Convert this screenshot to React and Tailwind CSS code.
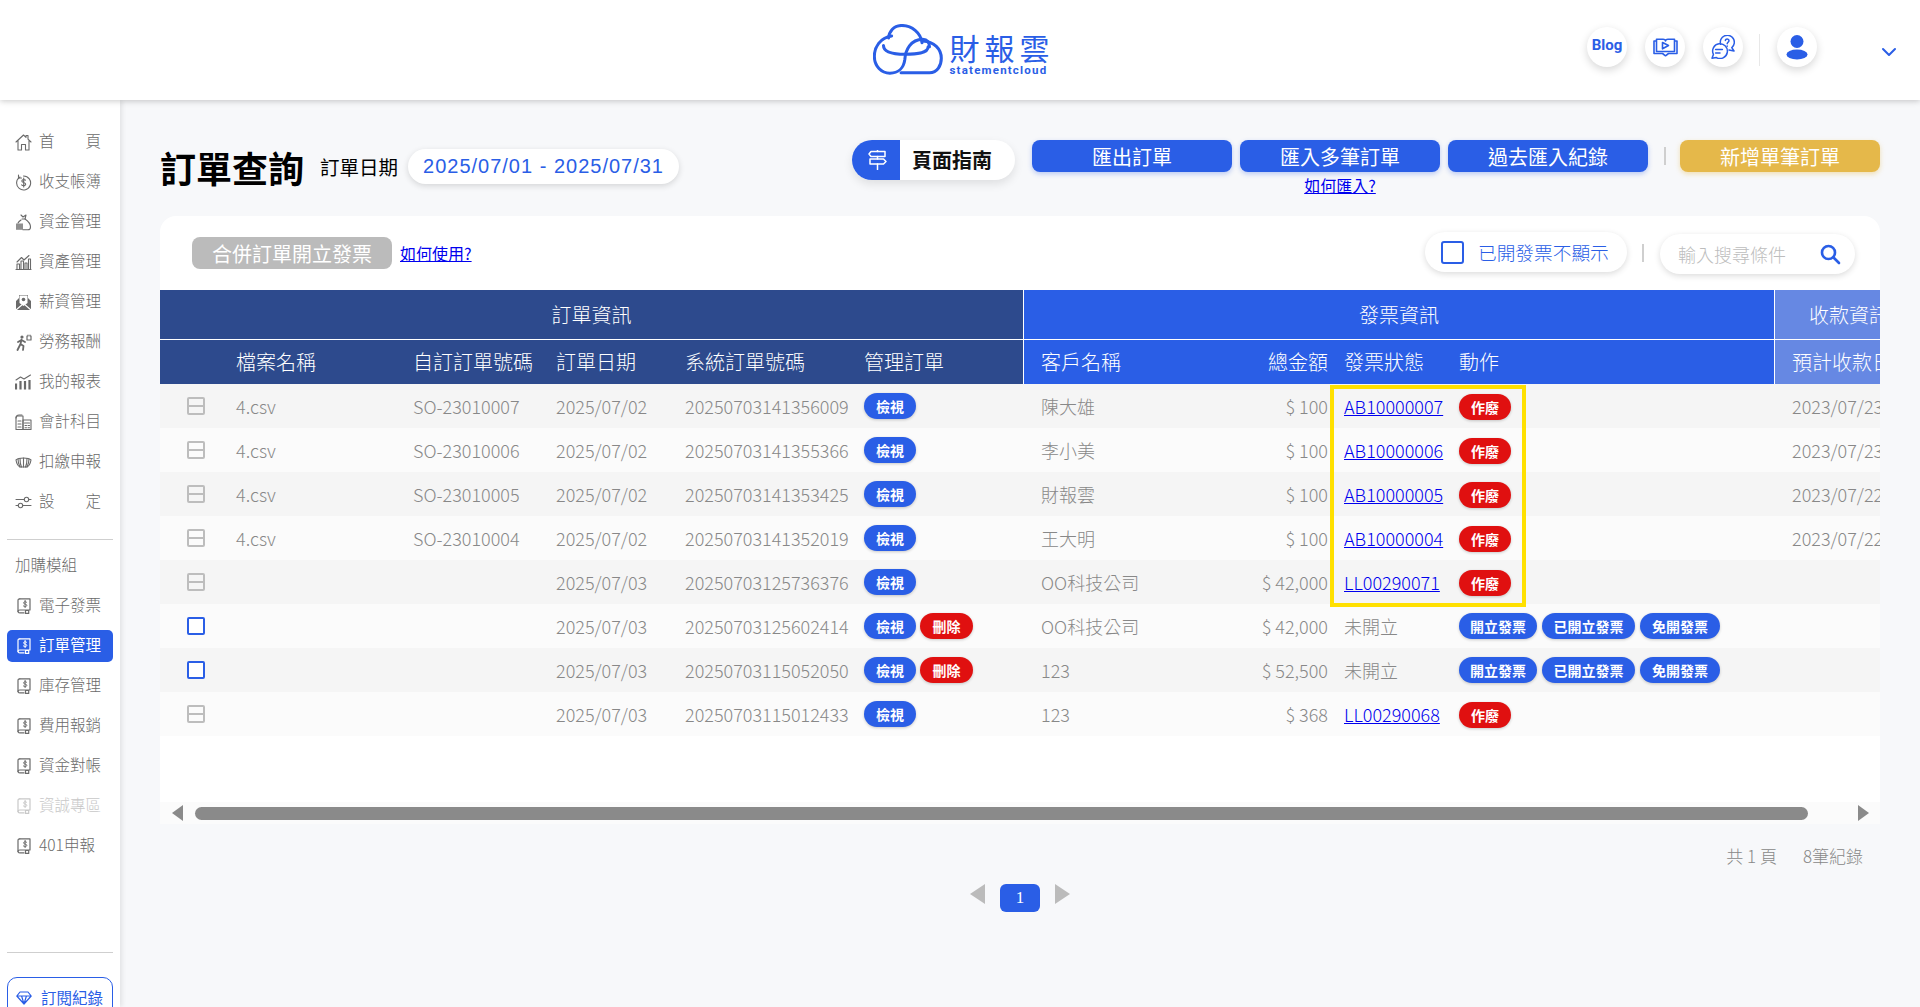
import React from "react";

const BLUE = "#2a5ee6";

function Logo() {
  return (
    <div className="flex items-start gap-[7px] pl-[2px]">
      <svg width="70" height="51" viewBox="45 45 207 150" fill="none" stroke={BLUE} strokeWidth="9" strokeLinecap="round" strokeLinejoin="round">
        <path d="M128 189 L212 189 C236 189 247 166 247 146 C247 118 226 97 192 95" />
        <path d="M190 100 C186 70 160 49 130 49 C106 49 93 66 91 86" />
        <path d="M100 80 C66 85 49 113 49 140 C49 170 70 190 95 190 C120 190 136 174 139 150 C141 122 156 90 192 90 C206 90 212 100 212 112" />
        <path d="M76 108 C76 130 112 134 140 134 C172 134 208 132 208 112" />
      </svg>
      <div className="flex flex-col w-[100px] pt-[6px]">
        <div className="text-[#2a5ee6] text-[30px] leading-[34px] tracking-[5px] whitespace-nowrap">財報雲</div>
        <div className="text-[#2a5ee6] text-[11.5px] leading-[12px] font-bold tracking-[1.2px] whitespace-nowrap font-[family-name:Roboto,sans-serif]">statementcloud</div>
      </div>
    </div>
  );
}

function Round({ children }) {
  return (
    <div className="w-[40px] h-[40px] rounded-full bg-white shadow-[0_3px_8px_rgba(0,0,0,0.16)] flex items-center justify-center">
      {children}
    </div>
  );
}

function Header() {
  return (
    <header className="relative z-20 h-[100px] shrink-0 bg-white shadow-[0_1px_6px_rgba(0,0,0,0.22)] grid grid-cols-[1fr_auto_1fr] items-start">
      <div />
      <div className="pt-[24px]"><Logo /></div>
      <div className="flex justify-end items-start pt-[27px] pr-[23px]">
        <div className="flex items-start gap-[18px]">
          <Round><span className="text-[#2a5ee6] text-[15px] leading-none pb-[3px] font-bold font-[family-name:Roboto,sans-serif]">Blog</span></Round>
          <Round>
            <svg width="25" height="19" viewBox="0 0 25 19" fill="none" stroke={BLUE} strokeWidth="1.6" strokeLinejoin="round" strokeLinecap="round">
              <path d="M3 3 H1 V15.5 H9.5 L12.5 17.8 L15.5 15.5 H24 V3 H22" />
              <path d="M3.5 1.2 H10 C11.5 1.2 12.5 1.8 12.5 3 C12.5 1.8 13.5 1.2 15 1.2 H21.5 V13.5 H3.5 Z" />
              <path d="M9.5 4.5 L15.5 7.5 L9.5 10.8 Z" />
            </svg>
          </Round>
          <Round>
            <svg width="24" height="24" viewBox="0 0 24 24" fill="none" stroke={BLUE} strokeWidth="1.5" strokeLinejoin="round" strokeLinecap="round">
              <path d="M9.6 9.2 A7 7 0 1 1 20.8 12.6 L23 16 L18 15" />
              <path d="M8 8.8 A7.4 7.4 0 1 1 5.4 22.6 L1 23.2 L2.4 19.4 A7.4 7.4 0 0 1 8 8.8 Z" />
              <path d="M14.4 5.4 C14.4 3.4 18 3.4 18 5.6 C18 7.2 16.2 7.3 16.2 8.8" />
              <path d="M16.2 11 V11.2" />
              <path d="M4.6 14.6 H11.4 M4.6 18 H9" />
            </svg>
          </Round>
        </div>
        <div className="w-px h-[32px] bg-[#e8e8e8] mt-[7px] ml-[16px] mr-[17px]" />
        <Round>
          <svg width="22" height="26" viewBox="0 0 22 26" fill={BLUE}>
            <circle cx="11" cy="7.5" r="6.5" />
            <ellipse cx="11" cy="20.5" rx="10.5" ry="5" />
          </svg>
        </Round>
        <svg className="ml-[64px] mt-[20px]" width="16" height="10" viewBox="0 0 16 10" fill="none" stroke={BLUE} strokeWidth="2" strokeLinecap="round" strokeLinejoin="round">
          <path d="M2 2 L8 8 L14 2" />
        </svg>
      </div>
    </header>
  );
}

const ic = { width: 17, height: 17, viewBox: "0 0 17 17", fill: "none", stroke: "currentColor", strokeWidth: 1.1, strokeLinejoin: "round", strokeLinecap: "round" };
const Icons = {
  home: <svg {...ic}><path d="M1 8 L8.5 1 L11 3.3 V1.5 H13 V5.2 L16 8 M3 6.5 V16 H6.5 V10.5 H10.5 V16 H14 V6.5" /></svg>,
  ledger: <svg {...ic}><path d="M5 3 A7 7 0 1 0 8.5 2" /><path d="M3.5 1 V4 H6.5" /><path d="M10.5 6.2 C9.5 5.2 6.8 5.4 6.8 7 C6.8 9 10.7 8 10.7 10.2 C10.7 11.9 7.8 12 6.6 10.8 M8.7 4 V13" /></svg>,
  bag: <svg {...ic}><path d="M6 1 L8 3 L11 1 L10 5 C13 7 15.5 10 15.5 13 C15.5 15 14.5 15.8 13 15.8 H8" /><path d="M7 5 H10.5" /><path d="M6 6 C4.5 7 3.5 8 3 9" /><rect x="1" y="9.5" width="7" height="6.3" fill="currentColor" stroke="none" opacity="0.75" /></svg>,
  asset: <svg {...ic}><path d="M1 15.5 H16" /><path d="M2 15 V10 H4.5 V15 M6 15 V7 H8.5 V15 M10 15 V9 H12 V15 M13.5 15 V5 H15.5 V15" /><path d="M2 8 L6.5 3.5 L9 6 L14 1.5" /></svg>,
  salary: <svg {...ic}><path d="M1 7 L4 4 V1 H13 V4 L16 7 V16 H1 Z" fill="currentColor" stroke="none" /><path d="M4.5 1.5 H12.5 V9 L8.5 12 L4.5 9 Z" fill="#fff" stroke="none" /><path d="M1 16 L8.5 9.5 L16 16" stroke="#fff" /><circle cx="8.5" cy="5.5" r="1.8" fill="currentColor" stroke="none" /></svg>,
  labor: <svg {...ic} strokeWidth="1.8"><circle cx="7" cy="3" r="1.6" fill="currentColor" stroke="none" /><path d="M6.5 5.5 L5.5 10 L2.5 16 M5.5 10 L8.5 12 L8 16 M6.5 6 L3 8 M6.5 6 L10 8" /><path d="M12 2 V6 H16 V2 M13 1 V2 M15 1 V2" strokeWidth="1.2" /></svg>,
  report: <svg {...ic}><path d="M1 15.5 V9.5 M5.5 15.5 V7 M10 15.5 V7 M14.5 15.5 V6" strokeWidth="2.2" strokeLinecap="butt" /><path d="M1 6 L5.5 3 L9 5 L15.5 1" /></svg>,
  account: <svg {...ic}><path d="M8 2 H3 C2 2 1 3 1 4 V15.5 H8 V2 Z" /><path d="M1 4 C1 2 2.5 1 4 1 H7" /><rect x="8" y="6" width="8" height="9.5" /><path d="M9.5 9 H14.5 M3 7 H6 M3 10 H6 M3 13 H6 M10 11.5 H11.5 M13 11.5 H14.5 M10 13.7 H11.5 M13 13.7 H14.5" /></svg>,
  tax: <svg {...ic}><path d="M1 6 C3 4 5 4 8.5 4 C12 4 14 4 16 6 C15.5 9 14 12 12 13 H5 C3 12 1.5 9 1 6 Z" /><path d="M5 4.5 C5 8 5.5 11 6.5 13 M8.5 4 V13 M12 4.5 C12 8 11.5 11 10.5 13 M3 5 C3 8 4 11 5 13 M14 5 C14 8 13 11 12 13" /></svg>,
  setting: <svg {...ic}><path d="M1 5.5 H9 M14 5.5 H16 M1 11.5 H3 M8 11.5 H16" /><circle cx="11.5" cy="5.5" r="2.2" /><circle cx="5.5" cy="11.5" r="2.2" /></svg>,
  module: <svg width="14" height="16" viewBox="0 0 14 16" fill="none" stroke="currentColor" strokeWidth="1.2" strokeLinejoin="round" strokeLinecap="round"><path d="M2.8 0.8 H13 V12 H2.8 C1.6 12 1 12.6 1 13.4 C1 14.2 1.6 14.9 2.8 14.9 H7" /><path d="M2.8 0.8 C1.6 0.8 1 1.5 1 2.5 V13.4" /><path d="M9.6 4.2 C8.8 3.4 6.6 3.5 6.6 4.9 C6.6 6.6 9.8 5.6 9.8 7.4 C9.8 8.8 7.4 8.8 6.4 8" strokeWidth="1" /><path d="M8.1 2.4 V9.6" strokeWidth="1" /><rect x="8.5" y="12.5" width="3.2" height="2.9" /></svg>,
  gem: <svg width="16" height="14" viewBox="0 0 20 17" fill="none" stroke={BLUE} strokeWidth="1.5" strokeLinejoin="round"><path d="M5 1 H15 L19 6 L10 16 L1 6 Z M1 6 H19 M7 6 L10 16 L13 6" /></svg>,
};

function SideItem({ icon, label, justify, active, dim, indent }) {
  const color = active ? "text-white" : dim ? "text-[#c8c8c8]" : "text-[#6a6a6a]";
  return (
    <div className="h-[40px] flex items-center">
      <div className={`w-[106px] ml-[7px] h-[32px] rounded-[5px] flex items-center ${active ? "bg-[#2a5ee6]" : ""} ${color}`}>
        <div className={`${indent ? "pl-[10px]" : "pl-[8px]"} w-[32px] shrink-0`}>{icon}</div>
        <div className={`text-[15.5px] leading-none pb-[2px] whitespace-nowrap ${justify ? "w-[62px] flex justify-between" : ""} ${active ? "font-normal" : "font-light"}`}>
          {justify ? label.split("").map((c, i) => <span key={i}>{c}</span>) : label}
        </div>
      </div>
    </div>
  );
}

function Sidebar() {
  return (
    <aside className="relative z-10 w-[120px] shrink-0 bg-white shadow-[2px_0_5px_rgba(0,0,0,0.09)] pt-[22px] overflow-hidden">
      <SideItem icon={Icons.home} label="首頁" justify />
      <SideItem icon={Icons.ledger} label="收支帳簿" />
      <SideItem icon={Icons.bag} label="資金管理" />
      <SideItem icon={Icons.asset} label="資產管理" />
      <SideItem icon={Icons.salary} label="薪資管理" />
      <SideItem icon={Icons.labor} label="勞務報酬" />
      <SideItem icon={Icons.report} label="我的報表" />
      <SideItem icon={Icons.account} label="會計科目" />
      <SideItem icon={Icons.tax} label="扣繳申報" />
      <SideItem icon={Icons.setting} label="設定" justify />
      <div className="h-px bg-[#cfcfcf] mx-[7px] mt-[17px]" />
      <div className="h-[40px] mt-[6px] pl-[15px] pb-[2px] flex items-center text-[15.5px] font-light text-[#6a6a6a]">加購模組</div>
      <SideItem indent icon={Icons.module} label="電子發票" />
      <SideItem indent active icon={Icons.module} label="訂單管理" />
      <SideItem indent icon={Icons.module} label="庫存管理" />
      <SideItem indent icon={Icons.module} label="費用報銷" />
      <SideItem indent icon={Icons.module} label="資金對帳" />
      <SideItem indent dim icon={Icons.module} label="資誠專區" />
      <SideItem indent icon={Icons.module} label="401申報" />
      <div className="h-px bg-[#cfcfcf] mx-[7px] mt-[86px]" />
      <div className="mx-[7px] mt-[24px] h-[44px] rounded-[10px] border border-[#2a5ee6] flex items-start pt-[9px] pl-[8px] gap-[9px]">
        <div className="pt-[4px]">{Icons.gem}</div>
        <span className="text-[15.5px] leading-[20px] text-[#2a5ee6]">訂閱紀錄</span>
      </div>
    </aside>
  );
}

function TopButton({ children, gold }) {
  return (
    <button className={`w-[200px] h-[32px] pt-[2px] rounded-[8px] text-white text-[20px] leading-none ${gold ? "bg-[#e5b84a] shadow-[0_2px_5px_rgba(229,184,74,0.4)]" : "bg-[#2a5ee6] shadow-[0_2px_5px_rgba(42,94,230,0.3)]"}`}>
      {children}
    </button>
  );
}

function TitleRow() {
  return (
    <div className="h-[76px] flex justify-between items-start shrink-0">
      <div className="flex items-center h-[35px] mt-[9px]">
        <h1 className="text-[36px] font-bold text-black leading-none w-[160px] whitespace-nowrap">訂單查詢</h1>
        <span className="text-[19.5px] text-black whitespace-nowrap w-[88px]">訂單日期</span>
        <div className="w-[271px] h-[35px] pb-[2px] rounded-full bg-white shadow-[0_2px_6px_rgba(0,0,0,0.14)] flex items-center justify-center text-[20px] tracking-[1px] text-[#2a5ee6] font-[family-name:Liberation_Sans,sans-serif] whitespace-nowrap">
          2025/07/01 - 2025/07/31
        </div>
      </div>
      <div className="flex items-start">
        <div className="flex w-[163px] h-[40px] rounded-full bg-white overflow-hidden shadow-[0_4px_10px_rgba(0,0,0,0.1)] mr-[17px]">
          <div className="w-[48px] bg-[#2a5ee6] flex items-center justify-center pl-[2px]">
            <svg width="19" height="20" viewBox="0 0 19 20" fill="none" stroke="#fff" strokeWidth="1.5" strokeLinejoin="round" strokeLinecap="round">
              <path d="M3 1.5 H17 V6.5 H3 L1 4 Z" />
              <path d="M2 9 H15.5 L18 11.5 L15.5 14 H2 Z" />
              <path d="M9.5 0.3 V1.5 M9.5 6.5 V9 M9.5 14 V19.5" />
            </svg>
          </div>
          <div className="flex-1 flex items-center pl-[12px] text-[20px] font-bold text-[#111] whitespace-nowrap">頁面指南</div>
        </div>
        <div className="flex items-start gap-[8px]">
          <TopButton>匯出訂單</TopButton>
          <div className="flex flex-col items-center">
            <TopButton>匯入多筆訂單</TopButton>
            <a className="text-[16px] leading-[20px] mt-[3px] text-[#0000ee] underline whitespace-nowrap">如何匯入?</a>
          </div>
          <TopButton>過去匯入紀錄</TopButton>
        </div>
        <div className="w-[2px] h-[18px] bg-[#cfcfcf] mt-[7px] ml-[16px] mr-[14px]" />
        <TopButton gold>新增單筆訂單</TopButton>
      </div>
    </div>
  );
}

function Toolbar() {
  return (
    <div className="h-[74px] shrink-0 flex items-center justify-between pl-[32px] pr-[25px]">
      <div className="flex items-center">
        <button className="w-[200px] h-[32px] pt-[2px] rounded-[8px] bg-[#bbbbbb] text-white text-[20px] leading-none whitespace-nowrap">合併訂單開立發票</button>
        <a className="ml-[8px] text-[16px] text-[#0000ee] underline whitespace-nowrap">如何使用?</a>
      </div>
      <div className="flex items-center">
        <label className="w-[202px] h-[40px] -mt-[2px] rounded-full bg-white shadow-[0_2px_6px_rgba(0,0,0,0.14)] flex items-center pl-[16px]">
          <span className="w-[23px] h-[23px] rounded-[3px] border-2 border-[#2a5ee6] bg-white shrink-0" />
          <span className="ml-[14px] pt-[1px] text-[18.7px] leading-none font-light text-[#2a5ee6] whitespace-nowrap">已開發票不顯示</span>
        </label>
        <div className="w-[2px] h-[18px] bg-[#cfcfcf] ml-[15px] mr-[16px]" />
        <div className="w-[195px] h-[40px] mt-[2px] rounded-full bg-white shadow-[0_2px_6px_rgba(0,0,0,0.14)] flex items-center pl-[18px] pr-[14px] justify-between">
          <span className="text-[18px] leading-none font-light text-[#bdbdbd] whitespace-nowrap">輸入搜尋條件</span>
          <svg width="21" height="21" viewBox="0 0 21 21" fill="none" stroke={BLUE} strokeWidth="2.6" strokeLinecap="round">
            <circle cx="8.5" cy="8.5" r="6.5" />
            <path d="M13.5 13.5 L19 19" />
          </svg>
        </div>
      </div>
    </div>
  );
}

function Pill({ red, children, w }) {
  return (
    <span className={`inline-flex items-center justify-center h-[26px] rounded-full text-white text-[14px] font-bold leading-none whitespace-nowrap shadow-[0_1px_3px_rgba(0,0,0,0.2)] ${red ? "bg-[#e01010]" : "bg-[#2a5ee6]"} ${w}`}>
      {children}
    </span>
  );
}

function Check({ on }) {
  return (
    <div className={`w-[18px] h-[18px] rounded-[2px] border-2 ml-[27px] flex items-center ${on ? "border-[#2a5ee6] bg-white" : "border-[#bdbdbd]"}`}>
      {!on && <div className="w-full h-[2px] bg-[#bdbdbd]" />}
    </div>
  );
}

const rows = [
  { file: "4.csv", so: "SO-23010007", date: "2025/07/02", sys: "20250703141356009", name: "陳大雄", amt: "$ 100", inv: "AB10000007", due: "2023/07/23" },
  { file: "4.csv", so: "SO-23010006", date: "2025/07/02", sys: "20250703141355366", name: "李小美", amt: "$ 100", inv: "AB10000006", due: "2023/07/23" },
  { file: "4.csv", so: "SO-23010005", date: "2025/07/02", sys: "20250703141353425", name: "財報雲", amt: "$ 100", inv: "AB10000005", due: "2023/07/22" },
  { file: "4.csv", so: "SO-23010004", date: "2025/07/02", sys: "20250703141352019", name: "王大明", amt: "$ 100", inv: "AB10000004", due: "2023/07/22" },
  { file: "", so: "", date: "2025/07/03", sys: "20250703125736376", name: "OO科技公司", amt: "$ 42,000", inv: "LL00290071", due: "" },
  { file: "", so: "", date: "2025/07/03", sys: "20250703125602414", name: "OO科技公司", amt: "$ 42,000", inv: "", due: "", open: true },
  { file: "", so: "", date: "2025/07/03", sys: "20250703115052050", name: "123", amt: "$ 52,500", inv: "", due: "", open: true },
  { file: "", so: "", date: "2025/07/03", sys: "20250703115012433", name: "123", amt: "$ 368", inv: "LL00290068", due: "" },
];

const dark = "bg-[#2d4a8d]";
const blue = "bg-[#2a5ee6]";
const pale = "bg-[#6688e3]";
const thBase = "text-[20px] font-light text-white whitespace-nowrap overflow-hidden p-0";

function Table() {
  return (
    <table className="table-fixed w-[1763px] border-separate border-spacing-0 font-light">
      <colgroup>
        <col className="w-[76px]" />
        <col className="w-[177px]" />
        <col className="w-[143px]" />
        <col className="w-[129px]" />
        <col className="w-[179px]" />
        <col className="w-[160px]" />
        <col className="w-[206px]" />
        <col className="w-[98px]" />
        <col className="w-[131px]" />
        <col className="w-[316px]" />
        <col className="w-[148px]" />
      </colgroup>
      <thead>
        <tr className="h-[50px]">
          <th colSpan={6} className={`${thBase} ${dark} text-center border-b border-r border-white`}>訂單資訊</th>
          <th colSpan={4} className={`${thBase} ${blue} text-center border-b border-r border-white`}>發票資訊</th>
          <th className={`${thBase} ${pale} text-center border-b border-white`}>收款資訊</th>
        </tr>
        <tr className="h-[44px]">
          <th className={`${thBase} ${dark}`} />
          <th className={`${thBase} ${dark} text-left`}>檔案名稱</th>
          <th className={`${thBase} ${dark} text-left`}>自訂訂單號碼</th>
          <th className={`${thBase} ${dark} text-left`}>訂單日期</th>
          <th className={`${thBase} ${dark} text-left`}>系統訂單號碼</th>
          <th className={`${thBase} ${dark} text-left border-r border-white`}>管理訂單</th>
          <th className={`${thBase} ${blue} text-left pl-[17px]`}>客戶名稱</th>
          <th className={`${thBase} ${blue} text-right`}>總金額</th>
          <th className={`${thBase} ${blue} text-left pl-[16px]`}>發票狀態</th>
          <th className={`${thBase} ${blue} text-left border-r border-white`}>動作</th>
          <th className={`${thBase} ${pale} text-left pl-[17px]`}>預計收款日</th>
        </tr>
      </thead>
      <tbody className="text-[18px] text-[#888888]">
        {rows.map((r, i) => (
          <tr key={i} className={`h-[44px] ${i % 2 === 0 ? "bg-[#f5f5f5]" : "bg-[#fbfbfb]"}`}>
            <td className="p-0"><Check on={r.open} /></td>
            <td className="p-0">{r.file}</td>
            <td className="p-0 whitespace-nowrap">{r.so}</td>
            <td className="p-0">{r.date}</td>
            <td className="p-0">{r.sys}</td>
            <td className="p-0">
              <div className="flex gap-[4px]">
                <Pill w="w-[52px]">檢視</Pill>
                {r.open && <Pill red w="w-[53px]">刪除</Pill>}
              </div>
            </td>
            <td className="p-0 pl-[17px] whitespace-nowrap">{r.name}</td>
            <td className="p-0 text-right whitespace-nowrap">{r.amt}</td>
            <td className="p-0 pl-[16px] whitespace-nowrap">
              {r.inv ? <a className="text-[#0000ee] underline">{r.inv}</a> : "未開立"}
            </td>
            <td className="p-0">
              {r.open ? (
                <div className="flex gap-[5px]">
                  <Pill w="w-[78px]">開立發票</Pill>
                  <Pill w="w-[93px]">已開立發票</Pill>
                  <Pill w="w-[80px]">免開發票</Pill>
                </div>
              ) : (
                <Pill red w="w-[52px]">作廢</Pill>
              )}
            </td>
            <td className="p-0 pl-[17px] whitespace-nowrap">{r.due}</td>
          </tr>
        ))}
      </tbody>
    </table>
  );
}

function ScrollBar() {
  return (
    <div className="h-[22px] shrink-0 bg-[#fbfbfb] flex items-center pl-[12px] pr-[11px]">
      <div className="w-0 h-0 border-y-[8px] border-y-transparent border-r-[11px] border-r-[#8a8a8a]" />
      <div className="w-[1613px] h-[13px] rounded-full bg-[#8a8a8a] ml-[12px]" />
      <div className="w-0 h-0 border-y-[8px] border-y-transparent border-l-[11px] border-l-[#8a8a8a] ml-auto" />
    </div>
  );
}

function Footer() {
  return (
    <div className="shrink-0">
      <div className="flex justify-end gap-[26px] pr-[17px] pt-[22px] text-[17px] leading-[20px] text-[#888888] font-light whitespace-nowrap">
        <span>共 1 頁</span>
        <span>8筆紀錄</span>
      </div>
      <div className="flex justify-center items-start gap-[15px] mt-[18px]">
        <div className="w-0 h-0 border-y-[10px] border-y-transparent border-r-[15px] border-r-[#bbbbbb]" />
        <div className="w-[40px] h-[28px] rounded-[6px] bg-[#2a5ee6] text-white text-[17px] flex items-center justify-center font-[family-name:Liberation_Serif,serif]">1</div>
        <div className="w-0 h-0 border-y-[10px] border-y-transparent border-l-[15px] border-l-[#bbbbbb]" />
      </div>
    </div>
  );
}

export default function App() {
  return (
    <div className="w-[1920px] h-screen overflow-hidden flex flex-col bg-[#f7f8fa] font-[family-name:Noto_Sans_CJK_TC,sans-serif]">
      <Header />
      <div className="flex flex-1 min-h-0">
        <Sidebar />
        <main className="flex-1 min-w-0 flex flex-col px-[40px] pt-[40px]">
          <TitleRow />
          <div className="h-[608px] shrink-0 bg-white rounded-t-[16px] overflow-hidden flex flex-col">
            <Toolbar />
            <div className="relative h-[512px] shrink-0 overflow-hidden">
              <Table />
              <div className="absolute left-[1170px] top-[95px] w-[196px] h-[222px] border-[4px] border-[#ffe000] pointer-events-none" />
            </div>
            <ScrollBar />
          </div>
          <Footer />
        </main>
      </div>
    </div>
  );
}
